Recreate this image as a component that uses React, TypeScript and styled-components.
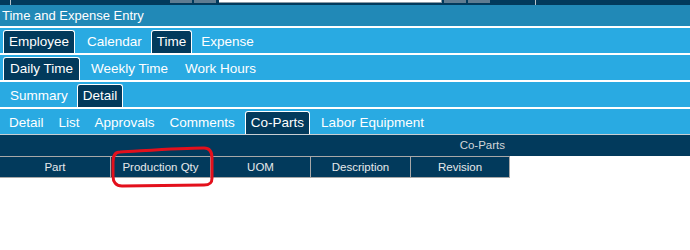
import React from 'react';
import styled, { createGlobalStyle } from 'styled-components';

const navy = '#023a5c';

const GlobalStyle = createGlobalStyle`
  body {
    margin: 0;
    background: #ffffff;
    font-family: "Liberation Sans", Arial, sans-serif;
  }
`;

const Page = styled.div`
  position: relative;
  width: 690px;
  height: 250px;
  overflow: hidden;
`;

const TopStrip = styled.div`
  display: flex;
  align-items: flex-start;
  height: 5px;
  background: ${navy};
`;

const StripTick = styled.div<{ $left: number }>`
  width: 1px;
  height: 5px;
  margin-left: ${(p) => p.$left}px;
  background: #b8c4cc;
`;

const StripButton = styled.div<{ $left: number }>`
  width: 22px;
  height: 3px;
  margin-left: ${(p) => p.$left}px;
  background: #5f7c91;
`;

const StripInput = styled.div`
  width: 222px;
  height: 2px;
  margin-left: 3px;
  background: #ffffff;
  border-right: 1px solid #8a9aa6;
  border-bottom: 1px solid #8a9aa6;
`;

const TitleBar = styled.div`
  height: 21px;
  padding-left: 2px;
  background: #2189b7;
  color: #ffffff;
  font-size: 13px;
  line-height: 21px;
`;

const TabRow = styled.div<{ $indent?: number }>`
  display: flex;
  align-items: flex-end;
  height: 25px;
  padding-left: ${(p) => p.$indent ?? 3}px;
  background: #29aae2;
  border-top: 2px solid #ffffff;
`;

const Tab = styled.div<{ $active?: boolean; $gap?: number; $pad?: number }>`
  box-sizing: border-box;
  height: ${(p) => (p.$active ? 23 : 25)}px;
  margin-right: ${(p) => p.$gap ?? 5}px;
  padding: 0 ${(p) => p.$pad ?? 5}px;
  color: #ffffff;
  font-size: 13.5px;
  line-height: ${(p) => (p.$active ? 21 : 25)}px;
  white-space: nowrap;
  background: ${(p) => (p.$active ? navy : 'transparent')};
  border: 1px solid ${(p) => (p.$active ? '#ffffff' : 'transparent')};
  border-bottom: none;
  border-radius: 3px 3px 0 0;
`;

const CaptionBand = styled.div`
  height: 21px;
  background: ${navy};
  border-top: 1px solid #c9ced2;
`;

const Caption = styled.div`
  width: 505px;
  text-align: right;
  color: #d2d6d9;
  font-size: 11.5px;
  line-height: 21px;
`;

const HeaderRow = styled.div`
  display: flex;
  width: 510px;
  background: ${navy};
  border-top: 1px solid #a8a8a8;
  border-bottom: 1px solid #a8a8a8;
`;

const HeaderCell = styled.div<{ $width: number }>`
  box-sizing: border-box;
  width: ${(p) => p.$width}px;
  height: 20px;
  border-right: 1px solid #a8a8a8;
  color: #e6e9eb;
  font-size: 11.5px;
  line-height: 20px;
  text-align: center;
`;

const Annotation = styled.svg`
  position: absolute;
  left: 100px;
  top: 140px;
  width: 120px;
  height: 52px;
  pointer-events: none;
`;

type TabDef = { label: string; active?: boolean; gap?: number; pad?: number };

const rows: { indent?: number; tabs: TabDef[] }[] = [
  {
    tabs: [
      { label: 'Employee', active: true, gap: 6 },
      { label: 'Calendar', gap: 3 },
      { label: 'Time', active: true, gap: 3 },
      { label: 'Expense' },
    ],
  },
  {
    tabs: [
      { label: 'Daily Time', active: true, gap: 5, pad: 6 },
      { label: 'Weekly Time', gap: 5 },
      { label: 'Work Hours' },
    ],
  },
  {
    indent: 4,
    tabs: [
      { label: 'Summary', gap: 3 },
      { label: 'Detail', active: true },
    ],
  },
  {
    indent: 3,
    tabs: [
      { label: 'Detail', gap: 3 },
      { label: 'List', gap: 3 },
      { label: 'Approvals', gap: 3 },
      { label: 'Comments', gap: 4 },
      { label: 'Co-Parts', active: true, gap: 5 },
      { label: 'Labor Equipment' },
    ],
  },
];

const columns = [
  { label: 'Part', width: 111 },
  { label: 'Production Qty', width: 100 },
  { label: 'UOM', width: 100 },
  { label: 'Description', width: 100 },
  { label: 'Revision', width: 99 },
];

export default function App() {
  return (
    <Page>
      <GlobalStyle />
      <TopStrip>
        <StripTick $left={10} />
        <StripButton $left={159} />
        <StripButton $left={2} />
        <StripInput />
        <StripButton $left={2} />
        <StripButton $left={2} />
        <StripTick $left={45} />
      </TopStrip>
      <TitleBar>Time and Expense Entry</TitleBar>
      {rows.map((row, i) => (
        <TabRow key={i} $indent={row.indent}>
          {row.tabs.map((t) => (
            <Tab key={t.label} $active={t.active} $gap={t.gap} $pad={t.pad}>
              {t.label}
            </Tab>
          ))}
        </TabRow>
      ))}
      <CaptionBand>
        <Caption>Co-Parts</Caption>
      </CaptionBand>
      <HeaderRow>
        {columns.map((c) => (
          <HeaderCell key={c.label} $width={c.width}>
            {c.label}
          </HeaderCell>
        ))}
      </HeaderRow>
      <Annotation viewBox="0 0 120 52">
        <path
          d="M20 12 C40 11 80 8 104 8 C110 8 112 12 112 18 L112 38 C112 43 110 45 104 45 L22 46 C16 46 13 42 13 36 L13 22 C13 16 15 12 20 12 Z"
          fill="none"
          stroke="#e3101c"
          strokeWidth="3"
          strokeLinejoin="round"
        />
      </Annotation>
    </Page>
  );
}
